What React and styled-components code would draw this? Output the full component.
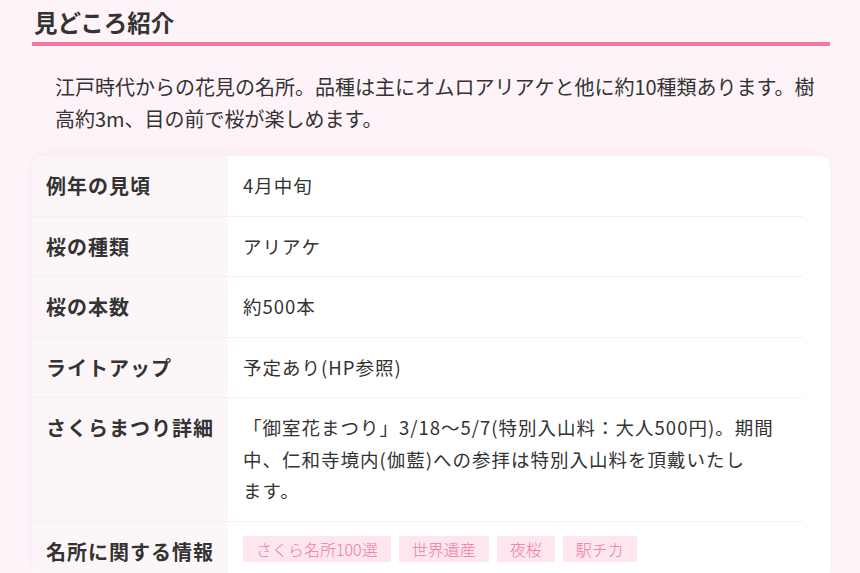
import React from 'react';
import styled, { createGlobalStyle } from 'styled-components';

const COLORS = {
	page: '#fef3f9',
	label: '#fdf6f9',
	line: '#fbedf3',
	pink: '#f1799f',
	tagBg: '#fde6ee',
	tagText: '#f07a9f',
	text: '#333333',
};

const GlobalStyle = createGlobalStyle`
	body {
		margin: 0;
		background: ${COLORS.page};
		color: ${COLORS.text};
		font-family: "Noto Sans CJK JP", "Noto Sans", sans-serif;
	}
`;

// values given as lines so the wrap matches the original page
const ROWS = [
	{ label: '例年の見頃', value: ['4月中旬'] },
	{ label: '桜の種類', value: ['アリアケ'] },
	{ label: '桜の本数', value: ['約500本'] },
	{ label: 'ライトアップ', value: ['予定あり(HP参照)'] },
	{
		label: 'さくらまつり詳細',
		value: [
			'「御室花まつり」3/18～5/7(特別入山料：大人500円)。期間',
			'中、仁和寺境内(伽藍)への参拝は特別入山料を頂戴いたし',
			'ます。',
		],
	},
];

const TAGS = ['さくら名所100選', '世界遺産', '夜桜', '駅チカ'];

function App() {
	return (
		<>
			<GlobalStyle />
			<Section>
				<Heading>見どころ紹介</Heading>
				<Lead>
					江戸時代からの花見の名所。品種は主にオムロアリアケと他に約10種類あります。樹高約3m、目の前で桜が楽しめます。
				</Lead>
				<Card>
					<Table>
						<tbody>
							{ROWS.map((row) => (
								<Row key={row.label}>
									<Label>{row.label}</Label>
									<Value>
										{row.value.map((line, i) => (
											<React.Fragment key={i}>
												{i > 0 && <br />}
												{line}
											</React.Fragment>
										))}
									</Value>
								</Row>
							))}
							<Row>
								<Label>名所に関する情報</Label>
								<Value>
									<TagList>
										{TAGS.map((tag) => (
											<Tag key={tag}>{tag}</Tag>
										))}
									</TagList>
								</Value>
							</Row>
						</tbody>
					</Table>
				</Card>
			</Section>
		</>
	);
}

const Section = styled.section`
	padding: 0 30px 0 32px;
`;

const Heading = styled.h2`
	margin: 0;
	padding: 6px 0 4px 2px;
	font-size: 23.5px;
	line-height: 32px;
	font-weight: 700;
	border-bottom: 4px solid ${COLORS.pink};
`;

const Lead = styled.p`
	margin: 25px 0 21px;
	padding: 0 6px 0 23px;
	font-size: 20px;
	line-height: 32px;
`;

const Card = styled.div`
	background: #fff;
	border-radius: 10px;
	padding-right: 27px;
	overflow: hidden;
	box-shadow: 0 -4px 6px rgba(250, 225, 235, 0.35);
`;

const Table = styled.table`
	width: 100%;
	border-collapse: collapse;
	line-height: 31.5px;
`;

const Row = styled.tr`
	border-bottom: 1px solid ${COLORS.line};
	&:last-child {
		border-bottom: none;
	}
`;

const Label = styled.th`
	box-sizing: border-box;
	width: 196px;
	padding: 14px 14px;
	background: ${COLORS.label};
	text-align: left;
	vertical-align: top;
	font-size: 20px;
	letter-spacing: 1px;
	font-weight: 700;
	white-space: nowrap;
`;

const Value = styled.td`
	padding: 14px 15px;
	vertical-align: top;
	font-size: 18.5px;
	letter-spacing: 1px;
	white-space: nowrap;
`;

const TagList = styled.div`
	display: flex;
	gap: 8px;
	padding-top: 0;
`;

const Tag = styled.span`
	display: inline-block;
	padding: 0 13px;
	line-height: 26px;
	font-size: 16px;
	letter-spacing: 0;
	font-weight: 300;
	color: ${COLORS.tagText};
	background: ${COLORS.tagBg};
`;

export default App;
